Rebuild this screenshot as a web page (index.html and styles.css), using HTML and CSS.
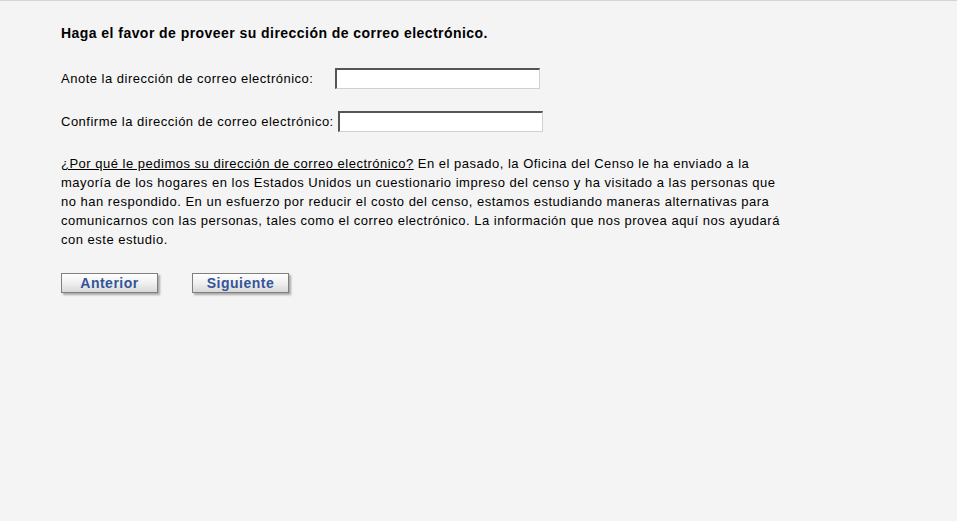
FILE: index.html
```html
<!doctype html>
<html>

<head>
    <meta charset="utf-8">
    <title>Dirección de correo electrónico</title>
    <link rel="stylesheet" href="styles.css">
</head>

<body>
    <div class="page">
        <h1 class="header">Haga el favor de proveer su dirección de correo electrónico.</h1>

        <div class="field">
            <label class="label label-first" for="email1">Anote la dirección de correo electrónico:</label>
            <input type="text" class="input" id="email1">
        </div>

        <div class="field">
            <label class="label" for="email2">Confirme la dirección de correo electrónico:</label>
            <input type="text" class="input" id="email2">
        </div>

        <p class="info">
            <a class="why" href="#">¿Por qué le pedimos su dirección de correo electrónico?</a>
            En el pasado, la Oficina del Censo le ha enviado a la mayoría de los hogares en los Estados
            Unidos un cuestionario impreso del censo y ha visitado a las personas que no han respondido.
            En un esfuerzo por reducir el costo del censo, estamos estudiando maneras alternativas para
            comunicarnos con las personas, tales como el correo electrónico. La información que nos
            provea aquí nos ayudará con este estudio.
        </p>

        <div class="buttons">
            <button class="button">Anterior</button>
            <button class="button">Siguiente</button>
        </div>
    </div>
</body>

</html>
```

FILE: styles.css
```css
html,
body {
    height: 100%;
}

body {
    margin: 0;
    font-family: "Liberation Sans", Arial, sans-serif;
    font-size: 13px;
    letter-spacing: 0.5px;
    color: #000;
    background-color: #f4f4f4;
    border-top: 1px solid #d4d4d4;
    box-sizing: border-box;
}

.page {
    padding: 24px 0 0 61px;
}

.header {
    margin: 0 0 27px 0;
    font-size: 14px;
    font-weight: bold;
    letter-spacing: 0.45px;
    line-height: 16px;
}

.field {
    display: flex;
    align-items: center;
    height: 21px;
    margin-bottom: 22px;
}

.label {
    line-height: 16px;
}

.label-first {
    margin-right: 22px;
}

.label + .input {
    margin-left: 4px;
}

.label-first + .input {
    margin-left: 0;
}

.input {
    width: 205px;
    height: 21px;
    padding: 0 3px;
    box-sizing: border-box;
    background: #fff;
    border-top: 2px solid #555;
    border-left: 2px solid #555;
    border-right: 1px solid #d4d0c8;
    border-bottom: 1px solid #d4d0c8;
    font: 13px "Liberation Sans", Arial, sans-serif;
}

.info {
    width: 732px;
    margin: 1px 0 24px 0;
    line-height: 19px;
}

.why {
    color: #000;
    text-decoration: underline;
}

.buttons {
    display: flex;
    gap: 34px;
}

.button {
    width: 97px;
    height: 20px;
    padding: 0;
    border: 1px solid #7f7f7f;
    background: linear-gradient(#ffffff, #f0f0f0 50%, #d8d8d8);
    box-shadow: 2px 2px 2px #a8a8a8;
    color: #34549a;
    font: bold 14px "Liberation Sans", Arial, sans-serif;
    letter-spacing: 0.5px;
    cursor: pointer;
}
```
